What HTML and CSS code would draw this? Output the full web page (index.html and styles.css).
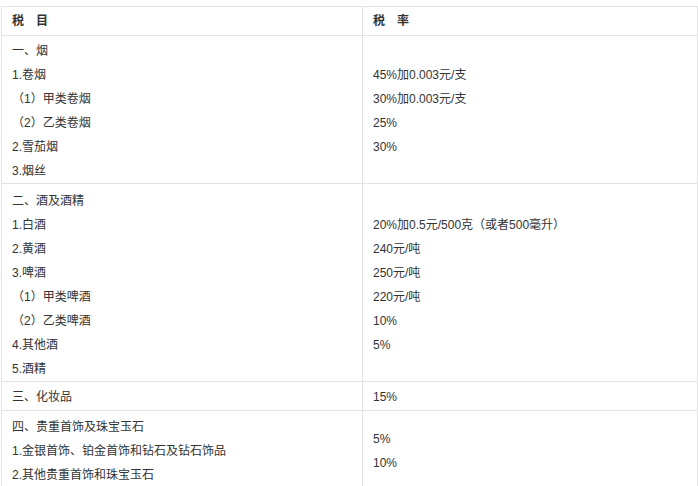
FILE: index.html
```html
<!DOCTYPE html>
<html lang="zh">
<head>
<meta charset="utf-8">
<link rel="stylesheet" href="styles.css">
</head>
<body>
<table class="tax">
  <colgroup><col class="c1"><col class="c2"></colgroup>
  <tr class="head">
    <td>税　目</td>
    <td>税　率</td>
  </tr>
  <tr class="g1">
    <td>
      <div>一、烟</div>
      <div>1.卷烟</div>
      <div>（1）甲类卷烟</div>
      <div>（2）乙类卷烟</div>
      <div>2.雪茄烟</div>
      <div>3.烟丝</div>
    </td>
    <td>
      <div>45%加0.003元/支</div>
      <div>30%加0.003元/支</div>
      <div>25%</div>
      <div>30%</div>
    </td>
  </tr>
  <tr class="g2">
    <td>
      <div>二、酒及酒精</div>
      <div>1.白酒</div>
      <div>2.黄酒</div>
      <div>3.啤酒</div>
      <div>（1）甲类啤酒</div>
      <div>（2）乙类啤酒</div>
      <div>4.其他酒</div>
      <div>5.酒精</div>
    </td>
    <td>
      <div>20%加0.5元/500克（或者500毫升）</div>
      <div>240元/吨</div>
      <div>250元/吨</div>
      <div>220元/吨</div>
      <div>10%</div>
      <div>5%</div>
    </td>
  </tr>
  <tr class="g3">
    <td><div>三、化妆品</div></td>
    <td><div>15%</div></td>
  </tr>
  <tr class="g4">
    <td>
      <div>四、贵重首饰及珠宝玉石</div>
      <div>1.金银首饰、铂金首饰和钻石及钻石饰品</div>
      <div>2.其他贵重首饰和珠宝玉石</div>
    </td>
    <td>
      <div>5%</div>
      <div>10%</div>
    </td>
  </tr>
</table>
</body>
</html>
```
FILE: styles.css
```css
html, body {
  margin: 0;
  padding: 0;
  background: #fff;
}
body {
  padding: 6px 0 0 1px;
  font-family: "Liberation Sans", "Noto Sans CJK SC", sans-serif;
  font-size: 12px;
  color: #333;
}
.tax {
  border-collapse: collapse;
  width: 696px;
  table-layout: fixed;
}
.c1 { width: 361px; }
.c2 { width: 335px; }
.tax td {
  border: 1px solid #e3e3e3;
  padding: 3px 10px 0;
  vertical-align: middle;
  line-height: 24px;
}
.tax .head td {
  font-weight: bold;
  padding: 2px 10px 2px;
}
.tax .g2 td {
  padding-top: 5px;
}
.tax .g3 td {
  padding-bottom: 1px;
}
.tax .g4 td {
  padding-top: 4px;
}
```
